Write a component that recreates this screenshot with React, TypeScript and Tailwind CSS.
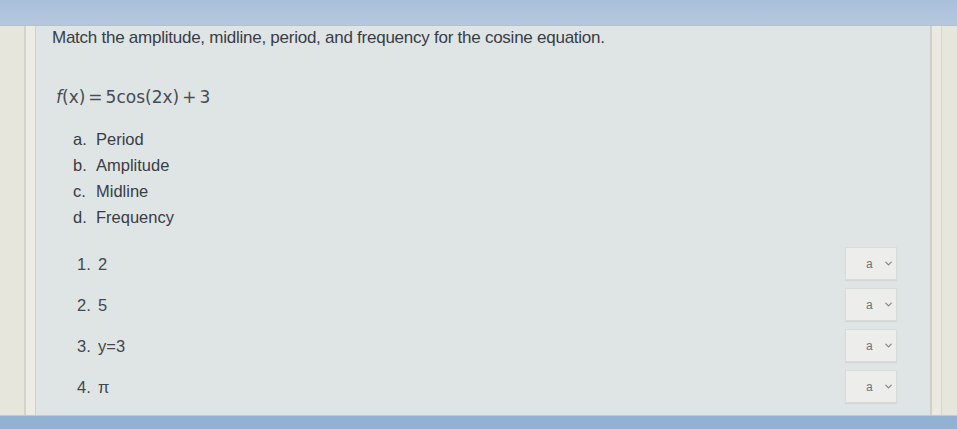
import { ChevronDown } from "lucide-react";

const options = [
  { key: "a.", label: "Period" },
  { key: "b.", label: "Amplitude" },
  { key: "c.", label: "Midline" },
  { key: "d.", label: "Frequency" },
];

const answers = [
  { num: "1.", value: "2" },
  { num: "2.", value: "5" },
  { num: "3.", value: "y=3" },
  { num: "4.", value: "π" },
];

export default function App() {
  return (
    <div className="w-[957px] h-[429px] flex flex-col bg-[#e4e4da] overflow-hidden font-['Liberation_Sans',Arial,sans-serif]">
      {/* top window band */}
      <div className="h-[26px] shrink-0 bg-gradient-to-b from-[#a9bfdb] to-[#b6c8de] border-b border-[#c9b9c0]" />

      <div className="flex flex-1 min-h-0">
        {/* left gutter */}
        <div className="w-[26px] shrink-0 bg-[#e6e6dc] border-r-2 border-[#d2d3c9]" />
        <div className="w-[10px] shrink-0 bg-[#ecece4] border-r border-[#cfd1c9]" />

        {/* question panel */}
        <div className="flex-1 bg-[#dfe4e5] pl-[16px] pt-[2px] text-[#393d45]">
          <p className="text-[17px] tracking-[-0.25px] leading-[20px]">
            Match the amplitude, midline, period, and frequency for the cosine equation.
          </p>

          <p className="mt-[38px] ml-[4px] text-[17px] leading-[22px] font-['DejaVu_Sans',sans-serif] text-[#474c54]">
            <span className="italic">f</span>(x)<span className="mx-[3px]">=</span>5cos(2x)<span className="mx-[3px]">+</span>3
          </p>

          <div className="mt-[21px] ml-[21px] flex flex-col gap-[6px]">
            {options.map((o) => (
              <div key={o.key} className="flex text-[16.5px] leading-[20px]">
                <span className="w-[23px]">{o.key}</span>
                <span>{o.label}</span>
              </div>
            ))}
          </div>

          <div className="mt-[20px] flex flex-col gap-[8px] pr-[33px]">
            {answers.map((a) => (
              <div key={a.num} className="flex items-center h-[33px]">
                <div className="flex ml-[25px] text-[16.5px] leading-[20px] text-[#43484f]">
                  <span className="w-[21px]">{a.num}</span>
                  <span>{a.value}</span>
                </div>
                <div className="ml-auto w-[52px] h-[33px] bg-[#edeeeb] border border-[#d8dcd8] shadow-[0_1px_1px_rgba(0,0,0,0.06)] flex items-center pl-[20px] gap-[10px] text-[12px] text-[#6f7378]">
                  <span>a</span>
                  <ChevronDown size={11} strokeWidth={2.5} className="text-[#7d8187]" />
                </div>
              </div>
            ))}
          </div>
        </div>

        {/* right gutter */}
        <div className="w-[12px] shrink-0 bg-[#eaeae2] border-l-2 border-[#cfd1c8] border-r border-r-[#d5d6cd]" />
        <div className="w-[15px] shrink-0 bg-[#e7e6dc]" />
      </div>

      {/* bottom window band */}
      <div className="h-[14px] shrink-0 bg-[#92b1d3] border-t border-[#b7cbe0]" />
    </div>
  );
}
